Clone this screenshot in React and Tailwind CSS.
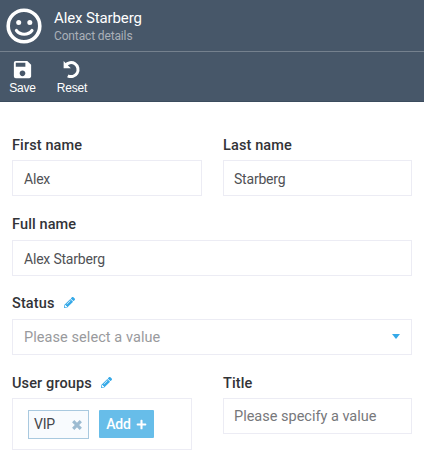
import { MdSave } from "react-icons/md";
import { FaPencilAlt, FaPlus } from "react-icons/fa";

function Label({ children, editable }) {
  return (
    <div className="flex h-5 items-center text-[14.5px] font-medium leading-5 tracking-[0.12px] text-[#323337]">
      <span className="pt-[2px]">{children}</span>
      {editable && <FaPencilAlt className="ml-[9px] -mt-[2px] size-[11px] text-[#35a9e8]" />}
    </div>
  );
}

function Box({ children, className = "" }) {
  return (
    <div className={`flex h-9 items-center border border-[#ececf4] pt-[2px] leading-5 ${className}`}>
      {children}
    </div>
  );
}

export default function App() {
  return (
    <div className="h-[458px] w-[424px] overflow-hidden bg-white font-['Roboto',sans-serif]">
      <header className="h-[102px] border-b border-[#3b4c5e] bg-[#475769] text-white">
        <div className="flex h-[52px] border-b border-[#75818e] pl-[6px]">
          <svg viewBox="0 0 36 36" className="mt-2 size-9" fill="none" stroke="white">
            <circle cx="18" cy="18" r="15.8" strokeWidth="3.6" />
            <circle cx="12.7" cy="14.5" r="2.5" fill="white" stroke="none" />
            <circle cx="23.8" cy="14.5" r="2.5" fill="white" stroke="none" />
            <path d="M10.4 22.5c3.9 5 11.7 5 15.6 0" strokeWidth="3.1" strokeLinecap="round" />
          </svg>
          <div className="ml-3 pt-2">
            <div className="text-[15px] leading-5 tracking-[-0.12px]">Alex Starberg</div>
            <div className="text-[12px] leading-4 tracking-[-0.14px] text-[#aab0b8]">Contact details</div>
          </div>
        </div>
        <div className="flex gap-5 pl-[9px] pt-[6px] font-['Liberation_Sans',sans-serif] text-[12px] leading-4">
          <div className="flex w-[27px] flex-col items-center">
            <MdSave className="size-[23px]" />
            <span className="-mt-px tracking-[-0.2px]">Save</span>
          </div>
          <div className="flex w-8 flex-col items-center">
            <svg viewBox="0 0 24 23" className="h-[23px] w-6" fill="none" stroke="white" strokeWidth="3">
              <path d="M5.5 7.3a7 7 0 1 1 2.3 10.5" />
              <path d="M3.6 3v7.2h7.2z" fill="white" stroke="none" />
            </svg>
            <span className="-mt-px tracking-[-0.2px]">Reset</span>
          </div>
        </div>
      </header>

      <main className="pl-3 pr-3 pt-[33px]">
        <div className="flex gap-[21px]">
          <div className="w-[190px]">
            <Label>First name</Label>
            <Box className="mt-[5px] pl-[11px] text-[14px] tracking-[-0.2px] text-[#505155]">Alex</Box>
          </div>
          <div className="w-[189px]">
            <Label>Last name</Label>
            <Box className="mt-[5px] pl-[10px] text-[14px] tracking-[-0.2px] text-[#505155]">Starberg</Box>
          </div>
        </div>
        <div className="mt-[18px]">
          <Label>Full name</Label>
          <Box className="mt-[6px] pl-[11px] text-[14px] tracking-[-0.2px] text-[#505155]">Alex Starberg</Box>
        </div>
        <div className="mt-[17px]">
          <Label editable>Status</Label>
          <Box className="mt-[6px] justify-between px-[11px] text-[14.5px] tracking-[0.07px] text-[#999a9d]">
            <span>Please select a value</span>
            <svg viewBox="0 0 8 5" className="mb-[4px] h-[5px] w-2"><path d="M0 0h8L4 5z" fill="#35a9e8" /></svg>
          </Box>
        </div>
        <div className="mt-[18px] flex gap-[31px]">
          <div className="w-[180px]">
            <Label editable>User groups</Label>
            <div className="mt-[5px] flex h-[52px] gap-[10px] border border-[#ececf4] pl-[15px] pt-[11px]">
              <div className="flex h-[29px] w-[61px] items-center justify-between border border-[#a9c9df] bg-[#f8fbfe] pl-[5px] pr-[6px] text-[14px] tracking-[-0.2px] text-[#44464a]">
                VIP
                <svg viewBox="0 0 10 10" className="size-[10px]" stroke="#9cbbd1" strokeWidth="3.2">
                  <path d="M1.2 1.2l7.6 7.6M8.8 1.2l-7.6 7.6" />
                </svg>
              </div>
              <button className="flex h-[28px] w-[55px] items-center justify-center gap-[5px] rounded-[1px] bg-[#67bde9] pt-px text-[14px] font-medium tracking-[-0.2px] text-white">
                Add
                <FaPlus className="size-[11px]" />
              </button>
            </div>
          </div>
          <div className="w-[189px]">
            <Label>Title</Label>
            <Box className="mt-[5px] pl-[10px] text-[14.5px] text-[#77787b]">Please specify a value</Box>
          </div>
        </div>
      </main>
    </div>
  );
}
